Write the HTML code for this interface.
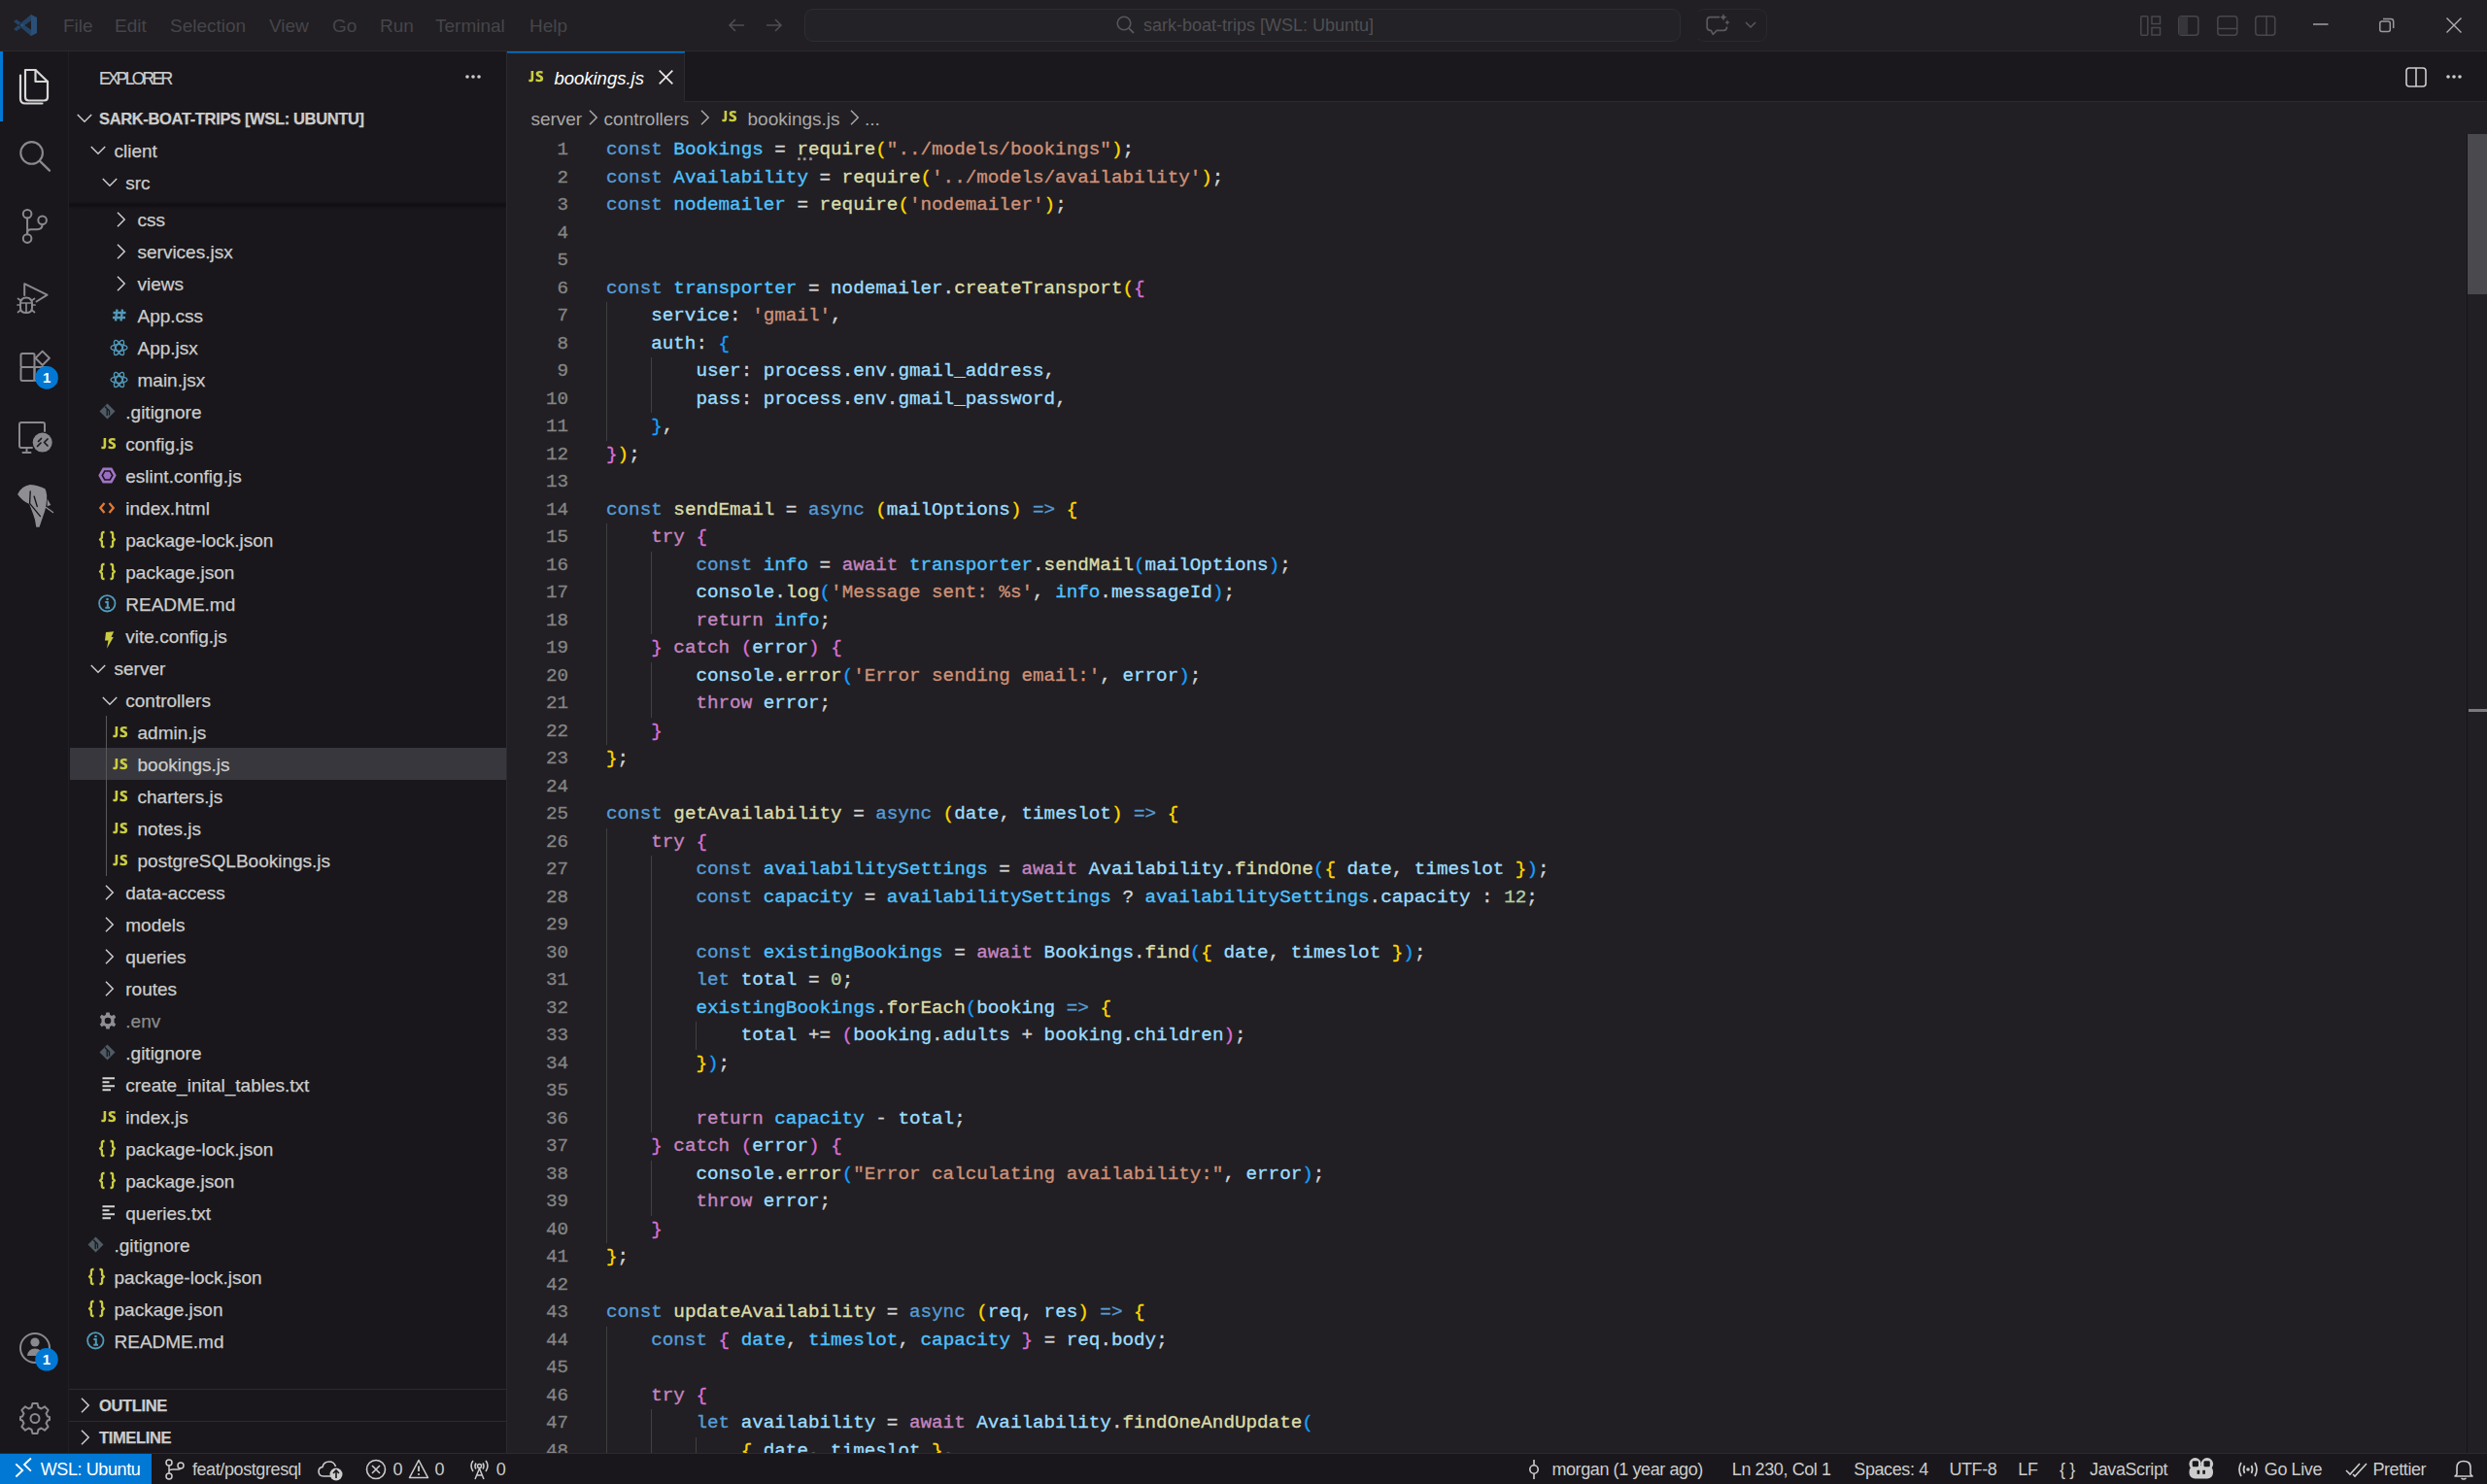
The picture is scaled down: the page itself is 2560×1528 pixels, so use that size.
<!DOCTYPE html>
<html><head><meta charset="utf-8">
<style>
*{margin:0;padding:0;box-sizing:border-box}
html,body{width:2560px;height:1528px;overflow:hidden;background:#211f23;font-family:"Liberation Sans",sans-serif}
.abs{position:absolute}
#title{position:absolute;left:0;top:0;width:2560px;height:53px;background:#211f23;border-bottom:1px solid #2a292d}
.menu{position:absolute;top:14.5px;font-size:19px;color:#46454a;line-height:24px;white-space:nowrap}
#act{position:absolute;left:0;top:53px;width:71px;height:1443px;background:#19171b;border-right:1px solid #211f23}
#side{position:absolute;left:71px;top:53px;width:451px;height:1443px;background:#19171b;border-right:1px solid #2b2a2e;overflow:hidden}
#editor{position:absolute;left:522px;top:53px;width:2038px;height:1443px;background:#211f23;overflow:hidden}
#status{position:absolute;left:0;top:1496px;width:2560px;height:32px;background:#19171b;border-top:1px solid #2b2a2e}
.ln{position:absolute;left:624px;height:28.5px;line-height:28.5px;font-family:"Liberation Mono",monospace;font-size:19.25px;white-space:pre;color:#d4d4d4;-webkit-text-stroke:0.35px currentColor}
.gn{position:absolute;left:520px;width:65px;text-align:right;height:28.5px;line-height:28.5px;font-family:"Liberation Mono",monospace;font-size:19.25px;color:#858585;-webkit-text-stroke:0.3px currentColor}
.ig{position:absolute;width:1px;background:#404040}
.row{position:absolute;left:0;width:451px;height:33px;line-height:33px;font-size:19px;color:#cccccc;white-space:nowrap;-webkit-text-stroke:0.25px currentColor}
.row .t{position:absolute;top:1px}
.row .ic{position:absolute}
.st{position:absolute;top:1px;height:31px;line-height:31px;font-size:18px;letter-spacing:-0.4px;color:#cccccc;white-space:nowrap}
svg{position:absolute;overflow:visible}
.bold .t{font-weight:bold;font-size:16.5px;letter-spacing:-0.35px}
</style></head>
<body>
<!-- TITLE BAR -->
<div id="title">
  <svg style="left:13px;top:14px" width="26" height="24" viewBox="0 0 26 24"><path d="M19 1 L25 4 V20 L19 23 L7 12 Z M19 7 L12 12 L19 17 Z" fill="#2a4f78"/><path d="M1 8 L4 6 L19 17 V23 Z M1 16 L4 18 L19 7 V1 Z" fill="#234366"/></svg>
  <div class="menu" style="left:65px">File</div>
  <div class="menu" style="left:118px">Edit</div>
  <div class="menu" style="left:175px">Selection</div>
  <div class="menu" style="left:277px">View</div>
  <div class="menu" style="left:342px">Go</div>
  <div class="menu" style="left:391px">Run</div>
  <div class="menu" style="left:448px">Terminal</div>
  <div class="menu" style="left:545px">Help</div>
  <!-- nav arrows -->
  <svg style="left:748px;top:16px" width="20" height="20" viewBox="0 0 20 20"><path d="M18 10 H3 M9 4 L3 10 L9 16" stroke="#4e4d52" stroke-width="1.6" fill="none"/></svg>
  <svg style="left:787px;top:16px" width="20" height="20" viewBox="0 0 20 20"><path d="M2 10 H17 M11 4 L17 10 L11 16" stroke="#4e4d52" stroke-width="1.6" fill="none"/></svg>
  <!-- command center -->
  <div class="abs" style="left:828px;top:9px;width:902px;height:34px;background:#232226;border:1px solid #2e2d31;border-radius:9px"></div>
  <svg style="left:1148px;top:15px" width="22" height="22" viewBox="0 0 22 22"><circle cx="9" cy="9" r="6.8" stroke="#57565b" stroke-width="1.6" fill="none"/><path d="M13.8 13.8 L19 19" stroke="#57565b" stroke-width="1.8"/></svg>
  <div class="menu" style="left:1177px;top:13.5px;font-size:18px;color:#504f54">sark-boat-trips [WSL: Ubuntu]</div>
  <div class="abs" style="left:1745px;top:8.5px;width:74px;height:34.5px;background:#211f23;border:1px solid #2a292d;border-left-color:transparent;border-radius:9px"></div>
  <svg style="left:0;top:0" width="1830" height="50" viewBox="0 0 1830 50"><path d="M1770 17.6 H1760.5 Q1757.2 17.6 1757.2 21 V28 Q1757.2 31.3 1760.5 31.3 H1761.3 L1763.2 35.3 L1767.2 31.3 H1774.3 Q1777.5 31.3 1777.5 28 V27.6" stroke="#5a595e" stroke-width="1.7" fill="none" stroke-linejoin="round"/><path d="M1774 13.8 Q1774.6 17.2 1777.8 17.8 Q1774.6 18.4 1774 21.8 Q1773.4 18.4 1770.2 17.8 Q1773.4 17.2 1774 13.8 Z M1778 20.2 Q1778.4 22.6 1780.7 23.1 Q1778.4 23.6 1778 26 Q1777.6 23.6 1775.3 23.1 Q1777.6 22.6 1778 20.2 Z" fill="#5a595e"/></svg>
  <svg style="left:1796px;top:22px" width="12" height="8" viewBox="0 0 12 8"><path d="M1 1 L6 6 L11 1" stroke="#58575c" stroke-width="1.5" fill="none"/></svg>
  <!-- layout icons -->
  <svg style="left:2203px;top:16px" width="22" height="21" viewBox="0 0 22 21"><rect x="0.8" y="0.8" width="7" height="19.4" rx="1" stroke="#48474c" stroke-width="1.5" fill="none"/><rect x="12" y="1" width="8.5" height="7.5" stroke="#48474c" stroke-width="1.5" fill="none"/><rect x="12" y="12.5" width="8.5" height="7.5" stroke="#48474c" stroke-width="1.5" fill="none"/></svg>
  <svg style="left:2242px;top:16px" width="22" height="21" viewBox="0 0 22 21"><rect x="0.8" y="0.8" width="20" height="19.4" rx="3" stroke="#48474c" stroke-width="1.5" fill="none"/><rect x="1" y="1" width="9" height="19" fill="#36353a"/></svg>
  <svg style="left:2282px;top:16px" width="22" height="21" viewBox="0 0 22 21"><rect x="0.8" y="0.8" width="20" height="19.4" rx="3" stroke="#48474c" stroke-width="1.5" fill="none"/><path d="M1 13.5 H21" stroke="#48474c" stroke-width="1.5"/></svg>
  <svg style="left:2321px;top:16px" width="22" height="21" viewBox="0 0 22 21"><rect x="0.8" y="0.8" width="20" height="19.4" rx="3" stroke="#48474c" stroke-width="1.5" fill="none"/><path d="M12 1 V20" stroke="#48474c" stroke-width="1.5"/></svg>
  <!-- window controls -->
  <svg style="left:2381px;top:20px" width="16" height="10" viewBox="0 0 16 10"><path d="M0 5 H15.5" stroke="#9a999d" stroke-width="1.6"/></svg>
  <svg style="left:2449px;top:18px" width="16" height="16" viewBox="0 0 16 16"><rect x="0.8" y="4" width="10.5" height="10.5" rx="2" stroke="#9a999d" stroke-width="1.5" fill="none"/><path d="M4 1.5 H12 Q14.7 1.5 14.7 4.2 V11" stroke="#9a999d" stroke-width="1.5" fill="none"/></svg>
  <svg style="left:2518px;top:18px" width="16" height="16" viewBox="0 0 16 16"><path d="M0.5 0.5 L15.5 15.5 M15.5 0.5 L0.5 15.5" stroke="#b0afb3" stroke-width="1.4"/></svg>
</div>

<!-- ACTIVITY BAR -->
<div id="act">
  <div class="abs" style="left:0;top:0;width:3px;height:72px;background:#0078d4"></div>
  <svg style="left:0;top:-53px" width="71" height="1496" viewBox="0 0 71 1496">
   <g fill="none" stroke-linejoin="round" stroke-linecap="round">
    <!-- explorer -->
    <path d="M26 72 H36.5 L49 84 V100 Q49 103.5 45.5 103.5 H29.5 Q26 103.5 26 100 Z" stroke="#d7d7d7" stroke-width="2.2"/>
    <path d="M36.5 72 V84 H49" stroke="#d7d7d7" stroke-width="2.2"/>
    <path d="M21 77.5 V101.5 Q21 106.5 26 106.5 H43.5" stroke="#d7d7d7" stroke-width="2.2"/>
    <!-- search -->
    <circle cx="32.6" cy="157.4" r="11.3" stroke="#8a898d" stroke-width="2.1"/>
    <path d="M40.8 165.6 L51 175.6" stroke="#8a898d" stroke-width="2.3"/>
    <!-- scm -->
    <circle cx="28.1" cy="220.2" r="4.3" stroke="#8a898d" stroke-width="2"/>
    <circle cx="28.1" cy="245.6" r="4.3" stroke="#8a898d" stroke-width="2"/>
    <circle cx="43.6" cy="226.8" r="4.3" stroke="#8a898d" stroke-width="2"/>
    <path d="M28.1 224.5 V241.3" stroke="#8a898d" stroke-width="2"/>
    <path d="M28.1 240 Q28.1 236.3 32 236.3 H38 Q43.6 236.3 43.6 231.1" stroke="#8a898d" stroke-width="2"/>
    <!-- debug -->
    <path d="M25.2 304 V292.2 L48.6 303.6 L37.5 310.5" stroke="#8a898d" stroke-width="2"/>
    <path d="M21 313 Q21 306.5 27 306.5 Q33 306.5 33 313 V317 Q33 322 27 322 Q21 322 21 317 Z" stroke="#8a898d" stroke-width="2" fill="#18171b"/>
    <path d="M21 312 H33 M18 314 H21 M33 314 H36 M18.5 307.5 L21.5 309.5 M35.5 307.5 L32.5 309.5 M18.5 321.5 L21.5 319 M35.5 321.5 L32.5 319 M27 312 V322" stroke="#8a898d" stroke-width="1.7"/>
    <!-- extensions -->
    <rect x="21.5" y="364" width="14" height="14" rx="1.5" stroke="#8a898d" stroke-width="2"/>
    <rect x="21.5" y="378" width="14" height="14" rx="1.5" stroke="#8a898d" stroke-width="2"/>
    <rect x="35.5" y="378" width="14" height="14" rx="1.5" stroke="#8a898d" stroke-width="2"/>
    <path d="M36.5 368.8 L43.7 361.6 L50.9 368.8 L43.7 376 Z" stroke="#8a898d" stroke-width="2"/>
    <!-- remote explorer -->
    <path d="M33 461 H22 Q20 461 20 459 V437 Q20 435 22 435 H44 Q46 435 46 437 V444" stroke="#8a898d" stroke-width="2"/>
    <path d="M23.5 466 H31.5 M27.5 461 V466" stroke="#8a898d" stroke-width="2"/>
    <circle cx="43.7" cy="455.6" r="10" fill="#8a898d" stroke="none"/>
    <path d="M38.5 459.5 L42 456 M45.5 455.5 L49 452 M42.5 451.5 L39.5 454.5 M49 459 L46 456" stroke="#18171b" stroke-width="1.7"/>
    <!-- elephant -->
    <path d="M18.1 509 Q22 500.5 31 499.1 Q40 500 46.4 503.3 Q48.8 508 48 514.3 Q47.5 524 44.5 531 L40.5 542.8 L37.3 542.8 Q36.5 535 34 529 L30.2 519.1 Q23 516 18.1 509 Z" fill="#8f8e92" stroke="none"/>
    <path d="M48.6 513.5 L52.3 520 L48.6 521.3 Z" fill="#8f8e92" stroke="none"/>
    <path d="M47.5 522.5 L54.5 527.5" stroke="#8f8e92" stroke-width="1.4"/>
    <path d="M31.2 505.8 L30.6 518.3 L41.5 531.6 M35.1 511 L38.3 521.5" stroke="#141215" stroke-width="1.3"/>
    <!-- accounts -->
    <circle cx="36" cy="1388" r="15" stroke="#8a898d" stroke-width="2"/>
    <circle cx="36" cy="1382" r="4.6" fill="#8a898d" stroke="none"/>
    <path d="M28 1396 Q29 1388.5 36 1388.5 Q43 1388.5 44 1396 Z" fill="#8a898d" stroke="none"/>
    <!-- gear -->
    <path d="M33.5 1445 H38.5 L39.5 1449 L42.5 1450.5 L46 1448.3 L49.6 1451.9 L47.5 1455.5 L49 1458.5 L51 1459 V1462 L49 1462.5 L47.5 1465.5 L49.6 1469 L46 1472.7 L42.5 1470.5 L39.5 1472 L38.5 1476 H33.5 L32.5 1472 L29.5 1470.5 L26 1472.7 L22.4 1469 L24.5 1465.5 L23 1462.5 L21 1462 V1459 L23 1458.5 L24.5 1455.5 L22.4 1451.9 L26 1448.3 L29.5 1450.5 L32.5 1449 Z" stroke="#8a898d" stroke-width="2"/>
    <circle cx="36" cy="1460.5" r="4.5" stroke="#8a898d" stroke-width="2"/>
   </g>
   <circle cx="48.1" cy="388.9" r="11.8" fill="#0078d4"/>
   <circle cx="48" cy="1399.8" r="11.8" fill="#0078d4"/>
   <path d="M45 384 L49.5 381.5 V396 M45.5 396 H52.5" stroke="#ffffff" stroke-width="0" fill="none"/>
  </svg>
  <div class="abs" style="left:36.3px;top:323.9px;width:23.6px;height:23.6px;color:#fff;font-size:15px;font-weight:bold;text-align:center;line-height:24px">1</div>
  <div class="abs" style="left:36.2px;top:1334.8px;width:23.6px;height:23.6px;color:#fff;font-size:15px;font-weight:bold;text-align:center;line-height:24px">1</div>
</div>

<!-- SIDEBAR -->
<div id="side">
<div class="abs" style="left:1px;top:717px;width:450px;height:33px;background:#37373d"></div>
<div class="abs" style="left:37.5px;top:684px;width:1px;height:165px;background:#585858"></div>
<div class="row " style="top:156.0px"><span class="t" style="left:70.5px;color:#cccccc">css</span></div>
<svg style="left:49.0px;top:165.0px" width="10" height="16" viewBox="0 0 10 16"><path d="M1 0.8 L8.2 8 L1 15.2" stroke="#cccccc" stroke-width="1.5" fill="none"/></svg>
<div class="row " style="top:189.0px"><span class="t" style="left:70.5px;color:#cccccc">services.jsx</span></div>
<svg style="left:49.0px;top:198.0px" width="10" height="16" viewBox="0 0 10 16"><path d="M1 0.8 L8.2 8 L1 15.2" stroke="#cccccc" stroke-width="1.5" fill="none"/></svg>
<div class="row " style="top:222.0px"><span class="t" style="left:70.5px;color:#cccccc">views</span></div>
<svg style="left:49.0px;top:231.0px" width="10" height="16" viewBox="0 0 10 16"><path d="M1 0.8 L8.2 8 L1 15.2" stroke="#cccccc" stroke-width="1.5" fill="none"/></svg>
<div class="row " style="top:255.0px"><span class="t" style="left:70.5px;color:#cccccc">App.css</span></div>
<svg style="left:45.0px;top:264.9px" width="14" height="13" viewBox="0 0 14 13"><path d="M4.5 0.5 L3 12.5 M10 0.5 L8.5 12.5 M0.5 4 H13.5 M0 9 H13" stroke="#519aba" stroke-width="2.3" fill="none"/></svg>
<div class="row " style="top:288.0px"><span class="t" style="left:70.5px;color:#cccccc">App.jsx</span></div>
<svg style="left:42.0px;top:296.5px" width="19" height="16" viewBox="0 0 19 16"><g stroke="#519aba" stroke-width="1.3" fill="none"><ellipse cx="9.5" cy="8" rx="8.5" ry="3.3"/><ellipse cx="9.5" cy="8" rx="8.5" ry="3.3" transform="rotate(60 9.5 8)"/><ellipse cx="9.5" cy="8" rx="8.5" ry="3.3" transform="rotate(-60 9.5 8)"/></g></svg>
<div class="row " style="top:321.0px"><span class="t" style="left:70.5px;color:#cccccc">main.jsx</span></div>
<svg style="left:42.0px;top:329.5px" width="19" height="16" viewBox="0 0 19 16"><g stroke="#519aba" stroke-width="1.3" fill="none"><ellipse cx="9.5" cy="8" rx="8.5" ry="3.3"/><ellipse cx="9.5" cy="8" rx="8.5" ry="3.3" transform="rotate(60 9.5 8)"/><ellipse cx="9.5" cy="8" rx="8.5" ry="3.3" transform="rotate(-60 9.5 8)"/></g></svg>
<div class="row " style="top:354.0px"><span class="t" style="left:58.3px;color:#cccccc">.gitignore</span></div>
<svg style="left:30.5px;top:362.0px" width="17" height="17" viewBox="0 0 17 17"><path d="M8.5 0.5 L16.5 8.5 L8.5 16.5 L0.5 8.5 Z" fill="#4f5b64"/><path d="M6 3.5 L10.5 8 V12.5 M8.2 5.7 V13" stroke="#19171b" stroke-width="1.3" fill="none"/></svg>
<div class="row " style="top:387.0px"><span class="t" style="left:58.3px;color:#cccccc">config.js</span></div>
<svg style="left:32.5px;top:398.0px" width="16" height="12" viewBox="0 0 16 12"><path d="M5.2 0 V8.2 Q5.2 11.3 2.3 11.3 Q0.8 11.3 0.2 10.8 L0.6 8.5 Q1.2 8.9 1.9 8.9 Q2.6 8.9 2.6 7.9 V0 Z" fill="#cbcb41"/><path d="M14.8 0.6 Q13.8 0 12 0 Q7.6 0 7.6 3.3 Q7.6 5.3 10.3 6.3 Q12.4 7.1 12.4 7.9 Q12.4 8.9 11 8.9 Q9.3 8.9 7.8 8 L7.3 10.5 Q8.6 11.3 10.9 11.3 Q15.2 11.3 15.2 7.8 Q15.2 5.6 12.6 4.6 Q10.4 3.8 10.4 3.1 Q10.4 2.3 11.8 2.3 Q13.3 2.3 14.3 2.9 Z" fill="#cbcb41"/></svg>
<div class="row " style="top:420.0px"><span class="t" style="left:58.3px;color:#cccccc">eslint.config.js</span></div>
<svg style="left:30.0px;top:428.0px" width="19" height="17" viewBox="0 0 19 17"><path d="M4.8 0.5 H14.2 L18.7 8.5 L14.2 16.5 H4.8 L0.3 8.5 Z" fill="#a074c4"/><path d="M6.8 4 H12.2 L14.8 8.5 L12.2 13 H6.8 L4.2 8.5 Z" fill="#9a6cc0" stroke="#1d1525" stroke-width="1.6"/></svg>
<div class="row " style="top:453.0px"><span class="t" style="left:58.3px;color:#cccccc">index.html</span></div>
<svg style="left:30.5px;top:464.0px" width="16" height="12" viewBox="0 0 16 12"><path d="M5.5 1 L1.3 6 L5.5 11 M10.5 1 L14.7 6 L10.5 11" stroke="#e37933" stroke-width="2.3" fill="none"/></svg>
<div class="row " style="top:486.0px"><span class="t" style="left:58.3px;color:#cccccc">package-lock.json</span></div>
<svg style="left:31.3px;top:494.3px" width="17" height="17" viewBox="0 0 17 17"><path d="M5.5 1 H4.6 Q2.9 1 2.9 3 V6.6 L1 8.5 L2.9 10.4 V14 Q2.9 16 4.6 16 H5.5 M11.5 1 H12.4 Q14.1 1 14.1 3 V6.6 L16 8.5 L14.1 10.4 V14 Q14.1 16 12.4 16 H11.5" stroke="#cbcb41" stroke-width="2.3" fill="none" stroke-linejoin="round"/></svg>
<div class="row " style="top:519.0px"><span class="t" style="left:58.3px;color:#cccccc">package.json</span></div>
<svg style="left:31.3px;top:527.3px" width="17" height="17" viewBox="0 0 17 17"><path d="M5.5 1 H4.6 Q2.9 1 2.9 3 V6.6 L1 8.5 L2.9 10.4 V14 Q2.9 16 4.6 16 H5.5 M11.5 1 H12.4 Q14.1 1 14.1 3 V6.6 L16 8.5 L14.1 10.4 V14 Q14.1 16 12.4 16 H11.5" stroke="#cbcb41" stroke-width="2.3" fill="none" stroke-linejoin="round"/></svg>
<div class="row " style="top:552.0px"><span class="t" style="left:58.3px;color:#cccccc">README.md</span></div>
<svg style="left:30.0px;top:559.3px" width="19" height="19" viewBox="0 0 19 19"><circle cx="9.3" cy="9.3" r="8.2" stroke="#519aba" stroke-width="1.8" fill="none"/><path d="M7.3 8 H9.8 V13.5 M7.3 13.7 H12" stroke="#519aba" stroke-width="2" fill="none"/><circle cx="9.5" cy="5" r="1.3" fill="#519aba"/></svg>
<div class="row " style="top:585.0px"><span class="t" style="left:58.3px;color:#cccccc">vite.config.js</span></div>
<svg style="left:36.0px;top:597.0px" width="11" height="18" viewBox="0 0 11 18"><path d="M2 1 L10.2 0.2 L7.5 6 L9.8 6 L3 17.8 L4.5 9.5 L1 9.5 Z" fill="#cbcb41"/></svg>
<div class="row " style="top:618.0px"><span class="t" style="left:46.5px;color:#cccccc">server</span></div>
<svg style="left:21.7px;top:630.5px" width="16" height="10" viewBox="0 0 16 10"><path d="M0.8 1 L8 8.2 L15.2 1" stroke="#cccccc" stroke-width="1.5" fill="none"/></svg>
<div class="row " style="top:651.0px"><span class="t" style="left:58.3px;color:#cccccc">controllers</span></div>
<svg style="left:34.0px;top:663.5px" width="16" height="10" viewBox="0 0 16 10"><path d="M0.8 1 L8 8.2 L15.2 1" stroke="#cccccc" stroke-width="1.5" fill="none"/></svg>
<div class="row " style="top:684.0px"><span class="t" style="left:70.5px;color:#cccccc">admin.js</span></div>
<svg style="left:44.5px;top:695.0px" width="16" height="12" viewBox="0 0 16 12"><path d="M5.2 0 V8.2 Q5.2 11.3 2.3 11.3 Q0.8 11.3 0.2 10.8 L0.6 8.5 Q1.2 8.9 1.9 8.9 Q2.6 8.9 2.6 7.9 V0 Z" fill="#cbcb41"/><path d="M14.8 0.6 Q13.8 0 12 0 Q7.6 0 7.6 3.3 Q7.6 5.3 10.3 6.3 Q12.4 7.1 12.4 7.9 Q12.4 8.9 11 8.9 Q9.3 8.9 7.8 8 L7.3 10.5 Q8.6 11.3 10.9 11.3 Q15.2 11.3 15.2 7.8 Q15.2 5.6 12.6 4.6 Q10.4 3.8 10.4 3.1 Q10.4 2.3 11.8 2.3 Q13.3 2.3 14.3 2.9 Z" fill="#cbcb41"/></svg>
<div class="row " style="top:717.0px"><span class="t" style="left:70.5px;color:#cccccc">bookings.js</span></div>
<svg style="left:44.5px;top:728.0px" width="16" height="12" viewBox="0 0 16 12"><path d="M5.2 0 V8.2 Q5.2 11.3 2.3 11.3 Q0.8 11.3 0.2 10.8 L0.6 8.5 Q1.2 8.9 1.9 8.9 Q2.6 8.9 2.6 7.9 V0 Z" fill="#cbcb41"/><path d="M14.8 0.6 Q13.8 0 12 0 Q7.6 0 7.6 3.3 Q7.6 5.3 10.3 6.3 Q12.4 7.1 12.4 7.9 Q12.4 8.9 11 8.9 Q9.3 8.9 7.8 8 L7.3 10.5 Q8.6 11.3 10.9 11.3 Q15.2 11.3 15.2 7.8 Q15.2 5.6 12.6 4.6 Q10.4 3.8 10.4 3.1 Q10.4 2.3 11.8 2.3 Q13.3 2.3 14.3 2.9 Z" fill="#cbcb41"/></svg>
<div class="row " style="top:750.0px"><span class="t" style="left:70.5px;color:#cccccc">charters.js</span></div>
<svg style="left:44.5px;top:761.0px" width="16" height="12" viewBox="0 0 16 12"><path d="M5.2 0 V8.2 Q5.2 11.3 2.3 11.3 Q0.8 11.3 0.2 10.8 L0.6 8.5 Q1.2 8.9 1.9 8.9 Q2.6 8.9 2.6 7.9 V0 Z" fill="#cbcb41"/><path d="M14.8 0.6 Q13.8 0 12 0 Q7.6 0 7.6 3.3 Q7.6 5.3 10.3 6.3 Q12.4 7.1 12.4 7.9 Q12.4 8.9 11 8.9 Q9.3 8.9 7.8 8 L7.3 10.5 Q8.6 11.3 10.9 11.3 Q15.2 11.3 15.2 7.8 Q15.2 5.6 12.6 4.6 Q10.4 3.8 10.4 3.1 Q10.4 2.3 11.8 2.3 Q13.3 2.3 14.3 2.9 Z" fill="#cbcb41"/></svg>
<div class="row " style="top:783.0px"><span class="t" style="left:70.5px;color:#cccccc">notes.js</span></div>
<svg style="left:44.5px;top:794.0px" width="16" height="12" viewBox="0 0 16 12"><path d="M5.2 0 V8.2 Q5.2 11.3 2.3 11.3 Q0.8 11.3 0.2 10.8 L0.6 8.5 Q1.2 8.9 1.9 8.9 Q2.6 8.9 2.6 7.9 V0 Z" fill="#cbcb41"/><path d="M14.8 0.6 Q13.8 0 12 0 Q7.6 0 7.6 3.3 Q7.6 5.3 10.3 6.3 Q12.4 7.1 12.4 7.9 Q12.4 8.9 11 8.9 Q9.3 8.9 7.8 8 L7.3 10.5 Q8.6 11.3 10.9 11.3 Q15.2 11.3 15.2 7.8 Q15.2 5.6 12.6 4.6 Q10.4 3.8 10.4 3.1 Q10.4 2.3 11.8 2.3 Q13.3 2.3 14.3 2.9 Z" fill="#cbcb41"/></svg>
<div class="row " style="top:816.0px"><span class="t" style="left:70.5px;color:#cccccc">postgreSQLBookings.js</span></div>
<svg style="left:44.5px;top:827.0px" width="16" height="12" viewBox="0 0 16 12"><path d="M5.2 0 V8.2 Q5.2 11.3 2.3 11.3 Q0.8 11.3 0.2 10.8 L0.6 8.5 Q1.2 8.9 1.9 8.9 Q2.6 8.9 2.6 7.9 V0 Z" fill="#cbcb41"/><path d="M14.8 0.6 Q13.8 0 12 0 Q7.6 0 7.6 3.3 Q7.6 5.3 10.3 6.3 Q12.4 7.1 12.4 7.9 Q12.4 8.9 11 8.9 Q9.3 8.9 7.8 8 L7.3 10.5 Q8.6 11.3 10.9 11.3 Q15.2 11.3 15.2 7.8 Q15.2 5.6 12.6 4.6 Q10.4 3.8 10.4 3.1 Q10.4 2.3 11.8 2.3 Q13.3 2.3 14.3 2.9 Z" fill="#cbcb41"/></svg>
<div class="row " style="top:849.0px"><span class="t" style="left:58.3px;color:#cccccc">data-access</span></div>
<svg style="left:37.0px;top:858.0px" width="10" height="16" viewBox="0 0 10 16"><path d="M1 0.8 L8.2 8 L1 15.2" stroke="#cccccc" stroke-width="1.5" fill="none"/></svg>
<div class="row " style="top:882.0px"><span class="t" style="left:58.3px;color:#cccccc">models</span></div>
<svg style="left:37.0px;top:891.0px" width="10" height="16" viewBox="0 0 10 16"><path d="M1 0.8 L8.2 8 L1 15.2" stroke="#cccccc" stroke-width="1.5" fill="none"/></svg>
<div class="row " style="top:915.0px"><span class="t" style="left:58.3px;color:#cccccc">queries</span></div>
<svg style="left:37.0px;top:924.0px" width="10" height="16" viewBox="0 0 10 16"><path d="M1 0.8 L8.2 8 L1 15.2" stroke="#cccccc" stroke-width="1.5" fill="none"/></svg>
<div class="row " style="top:948.0px"><span class="t" style="left:58.3px;color:#cccccc">routes</span></div>
<svg style="left:37.0px;top:957.0px" width="10" height="16" viewBox="0 0 10 16"><path d="M1 0.8 L8.2 8 L1 15.2" stroke="#cccccc" stroke-width="1.5" fill="none"/></svg>
<div class="row " style="top:981.0px"><span class="t" style="left:58.3px;color:#8b8b8b">.env</span></div>
<svg style="left:30.5px;top:989.3px" width="18" height="18" viewBox="0 0 18 18"><path d="M7.3 0.5 H10.7 L11.2 3 L13 4 L15.4 2.8 L17.2 5.3 L15.5 7.2 V10.8 L17.2 12.7 L15.4 15.2 L13 14 L11.2 15 L10.7 17.5 H7.3 L6.8 15 L5 14 L2.6 15.2 L0.8 12.7 L2.5 10.8 V7.2 L0.8 5.3 L2.6 2.8 L5 4 L6.8 3 Z" fill="#8f8f93"/><circle cx="9" cy="9" r="3.3" fill="#19171b"/></svg>
<div class="row " style="top:1014.0px"><span class="t" style="left:58.3px;color:#cccccc">.gitignore</span></div>
<svg style="left:30.5px;top:1022.0px" width="17" height="17" viewBox="0 0 17 17"><path d="M8.5 0.5 L16.5 8.5 L8.5 16.5 L0.5 8.5 Z" fill="#4f5b64"/><path d="M6 3.5 L10.5 8 V12.5 M8.2 5.7 V13" stroke="#19171b" stroke-width="1.3" fill="none"/></svg>
<div class="row " style="top:1047.0px"><span class="t" style="left:58.3px;color:#cccccc">create_inital_tables.txt</span></div>
<svg style="left:34.0px;top:1056.3px" width="14" height="15" viewBox="0 0 14 15"><path d="M0.5 1.3 H13 M0.5 5.3 H7.5 M0.5 9.3 H13 M0.5 13.3 H9" stroke="#d4d7d6" stroke-width="2.1"/></svg>
<div class="row " style="top:1080.0px"><span class="t" style="left:58.3px;color:#cccccc">index.js</span></div>
<svg style="left:32.5px;top:1091.0px" width="16" height="12" viewBox="0 0 16 12"><path d="M5.2 0 V8.2 Q5.2 11.3 2.3 11.3 Q0.8 11.3 0.2 10.8 L0.6 8.5 Q1.2 8.9 1.9 8.9 Q2.6 8.9 2.6 7.9 V0 Z" fill="#cbcb41"/><path d="M14.8 0.6 Q13.8 0 12 0 Q7.6 0 7.6 3.3 Q7.6 5.3 10.3 6.3 Q12.4 7.1 12.4 7.9 Q12.4 8.9 11 8.9 Q9.3 8.9 7.8 8 L7.3 10.5 Q8.6 11.3 10.9 11.3 Q15.2 11.3 15.2 7.8 Q15.2 5.6 12.6 4.6 Q10.4 3.8 10.4 3.1 Q10.4 2.3 11.8 2.3 Q13.3 2.3 14.3 2.9 Z" fill="#cbcb41"/></svg>
<div class="row " style="top:1113.0px"><span class="t" style="left:58.3px;color:#cccccc">package-lock.json</span></div>
<svg style="left:31.3px;top:1121.3px" width="17" height="17" viewBox="0 0 17 17"><path d="M5.5 1 H4.6 Q2.9 1 2.9 3 V6.6 L1 8.5 L2.9 10.4 V14 Q2.9 16 4.6 16 H5.5 M11.5 1 H12.4 Q14.1 1 14.1 3 V6.6 L16 8.5 L14.1 10.4 V14 Q14.1 16 12.4 16 H11.5" stroke="#cbcb41" stroke-width="2.3" fill="none" stroke-linejoin="round"/></svg>
<div class="row " style="top:1146.0px"><span class="t" style="left:58.3px;color:#cccccc">package.json</span></div>
<svg style="left:31.3px;top:1154.3px" width="17" height="17" viewBox="0 0 17 17"><path d="M5.5 1 H4.6 Q2.9 1 2.9 3 V6.6 L1 8.5 L2.9 10.4 V14 Q2.9 16 4.6 16 H5.5 M11.5 1 H12.4 Q14.1 1 14.1 3 V6.6 L16 8.5 L14.1 10.4 V14 Q14.1 16 12.4 16 H11.5" stroke="#cbcb41" stroke-width="2.3" fill="none" stroke-linejoin="round"/></svg>
<div class="row " style="top:1179.0px"><span class="t" style="left:58.3px;color:#cccccc">queries.txt</span></div>
<svg style="left:34.0px;top:1188.3px" width="14" height="15" viewBox="0 0 14 15"><path d="M0.5 1.3 H13 M0.5 5.3 H7.5 M0.5 9.3 H13 M0.5 13.3 H9" stroke="#d4d7d6" stroke-width="2.1"/></svg>
<div class="row " style="top:1212.0px"><span class="t" style="left:46.5px;color:#cccccc">.gitignore</span></div>
<svg style="left:19.0px;top:1220.0px" width="17" height="17" viewBox="0 0 17 17"><path d="M8.5 0.5 L16.5 8.5 L8.5 16.5 L0.5 8.5 Z" fill="#4f5b64"/><path d="M6 3.5 L10.5 8 V12.5 M8.2 5.7 V13" stroke="#19171b" stroke-width="1.3" fill="none"/></svg>
<div class="row " style="top:1245.0px"><span class="t" style="left:46.5px;color:#cccccc">package-lock.json</span></div>
<svg style="left:19.8px;top:1253.3px" width="17" height="17" viewBox="0 0 17 17"><path d="M5.5 1 H4.6 Q2.9 1 2.9 3 V6.6 L1 8.5 L2.9 10.4 V14 Q2.9 16 4.6 16 H5.5 M11.5 1 H12.4 Q14.1 1 14.1 3 V6.6 L16 8.5 L14.1 10.4 V14 Q14.1 16 12.4 16 H11.5" stroke="#cbcb41" stroke-width="2.3" fill="none" stroke-linejoin="round"/></svg>
<div class="row " style="top:1278.0px"><span class="t" style="left:46.5px;color:#cccccc">package.json</span></div>
<svg style="left:19.8px;top:1286.3px" width="17" height="17" viewBox="0 0 17 17"><path d="M5.5 1 H4.6 Q2.9 1 2.9 3 V6.6 L1 8.5 L2.9 10.4 V14 Q2.9 16 4.6 16 H5.5 M11.5 1 H12.4 Q14.1 1 14.1 3 V6.6 L16 8.5 L14.1 10.4 V14 Q14.1 16 12.4 16 H11.5" stroke="#cbcb41" stroke-width="2.3" fill="none" stroke-linejoin="round"/></svg>
<div class="row " style="top:1311.0px"><span class="t" style="left:46.5px;color:#cccccc">README.md</span></div>
<svg style="left:18.0px;top:1318.3px" width="19" height="19" viewBox="0 0 19 19"><circle cx="9.3" cy="9.3" r="8.2" stroke="#519aba" stroke-width="1.8" fill="none"/><path d="M7.3 8 H9.8 V13.5 M7.3 13.7 H12" stroke="#519aba" stroke-width="2" fill="none"/><circle cx="9.5" cy="5" r="1.3" fill="#519aba"/></svg>
<div class="abs" style="left:0;top:84px;width:451px;height:72px;background:#19171b"></div>
<div class="abs" style="left:0;top:154px;width:451px;height:8px;background:linear-gradient(#19171b,#100e12 50%,#19171b)"></div>
<div class="row " style="top:85.0px"><span class="t" style="left:46.5px;color:#cccccc">client</span></div>
<svg style="left:21.7px;top:97.0px" width="16" height="10" viewBox="0 0 16 10"><path d="M0.8 1 L8 8.2 L15.2 1" stroke="#cccccc" stroke-width="1.5" fill="none"/></svg>
<div class="row " style="top:117.5px"><span class="t" style="left:58.3px;color:#cccccc">src</span></div>
<svg style="left:34.0px;top:130.0px" width="16" height="10" viewBox="0 0 16 10"><path d="M0.8 1 L8 8.2 L15.2 1" stroke="#cccccc" stroke-width="1.5" fill="none"/></svg>
<div class="row bold" style="top:52.0px"><span class="t" style="left:31.0px;color:#cccccc">SARK-BOAT-TRIPS [WSL: UBUNTU]</span></div>
<svg style="left:8.0px;top:63.5px" width="16" height="10" viewBox="0 0 16 10"><path d="M0.8 1 L8 8.2 L15.2 1" stroke="#cccccc" stroke-width="1.5" fill="none"/></svg>
<div class="abs" style="left:31.0px;top:18px;font-size:17.5px;color:#cccccc;line-height:20px;letter-spacing:-2.75px;white-space:nowrap;-webkit-text-stroke:0.2px currentColor">EXPLORER</div>
<svg style="left:407.5px;top:24px" width="16" height="4" viewBox="0 0 16 4"><circle cx="2" cy="2" r="1.8" fill="#cccccc"/><circle cx="8" cy="2" r="1.8" fill="#cccccc"/><circle cx="14" cy="2" r="1.8" fill="#cccccc"/></svg>
<div class="abs" style="left:0;top:1377px;width:451px;height:1px;background:#2b2a2e"></div>
<div class="row bold" style="top:1377.0px"><span class="t" style="left:31.0px;color:#cccccc">OUTLINE</span></div>
<svg style="left:12.0px;top:1386.0px" width="10" height="16" viewBox="0 0 10 16"><path d="M1 0.8 L8.2 8 L1 15.2" stroke="#cccccc" stroke-width="1.5" fill="none"/></svg>
<div class="abs" style="left:0;top:1410px;width:451px;height:1px;background:#2b2a2e"></div>
<div class="row bold" style="top:1410.0px"><span class="t" style="left:31.0px;color:#cccccc">TIMELINE</span></div>
<svg style="left:12.0px;top:1419.0px" width="10" height="16" viewBox="0 0 10 16"><path d="M1 0.8 L8.2 8 L1 15.2" stroke="#cccccc" stroke-width="1.5" fill="none"/></svg>
</div>

<!-- EDITOR -->
<div id="editor">
<div class="abs" style="left:0;top:0;width:2038px;height:52px;background:#1a181c;border-bottom:1px solid #2b2a2e"></div>
<div class="abs" style="left:0;top:0;width:183px;height:52px;background:#211f23;border-right:1px solid #2b2a2e"></div>
<div class="abs" style="left:0;top:0;width:183px;height:1px;background:#0078d4"></div>
<div class="abs" style="left:0;top:1px;width:183px;height:1px;background:#0a4c80"></div>
<svg style="left:21.7px;top:20.0px" width="16" height="12" viewBox="0 0 16 12"><path d="M5.2 0 V8.2 Q5.2 11.3 2.3 11.3 Q0.8 11.3 0.2 10.8 L0.6 8.5 Q1.2 8.9 1.9 8.9 Q2.6 8.9 2.6 7.9 V0 Z" fill="#cbcb41"/><path d="M14.8 0.6 Q13.8 0 12 0 Q7.6 0 7.6 3.3 Q7.6 5.3 10.3 6.3 Q12.4 7.1 12.4 7.9 Q12.4 8.9 11 8.9 Q9.3 8.9 7.8 8 L7.3 10.5 Q8.6 11.3 10.9 11.3 Q15.2 11.3 15.2 7.8 Q15.2 5.6 12.6 4.6 Q10.4 3.8 10.4 3.1 Q10.4 2.3 11.8 2.3 Q13.3 2.3 14.3 2.9 Z" fill="#cbcb41"/></svg>
<div class="abs" style="left:48.4px;top:16.5px;font:italic 18.5px 'Liberation Sans',sans-serif;color:#ffffff;line-height:22px;white-space:nowrap">bookings.js</div>
<svg style="left:155.5px;top:19.0px" width="15" height="15" viewBox="0 0 15 15"><path d="M0.7 0.7 L14.3 14.3 M14.3 0.7 L0.7 14.3" stroke="#e8e8e8" stroke-width="1.7"/></svg>
<svg style="left:1954.0px;top:15.5px" width="22" height="21" viewBox="0 0 22 21"><rect x="1" y="1" width="20" height="19" rx="3" stroke="#cccccc" stroke-width="1.6" fill="none"/><path d="M11 1 V20" stroke="#cccccc" stroke-width="1.6"/></svg>
<svg style="left:1996.0px;top:24.0px" width="16" height="4" viewBox="0 0 16 4"><circle cx="2" cy="2" r="1.8" fill="#cccccc"/><circle cx="8" cy="2" r="1.8" fill="#cccccc"/><circle cx="14" cy="2" r="1.8" fill="#cccccc"/></svg>
<div class="abs" style="left:24.4px;top:59.0px;font-size:19px;color:#a9a9a9;line-height:22px;white-space:nowrap">server</div>
<svg style="left:84.0px;top:60.0px" width="10" height="16" viewBox="0 0 10 16"><path d="M1 0.8 L8.2 8 L1 15.2" stroke="#a9a9a9" stroke-width="1.5" fill="none"/></svg>
<div class="abs" style="left:99.6px;top:59.0px;font-size:19px;color:#a9a9a9;line-height:22px;white-space:nowrap">controllers</div>
<svg style="left:199.0px;top:60.0px" width="10" height="16" viewBox="0 0 10 16"><path d="M1 0.8 L8.2 8 L1 15.2" stroke="#a9a9a9" stroke-width="1.5" fill="none"/></svg>
<svg style="left:221.2px;top:61.0px" width="16" height="12" viewBox="0 0 16 12"><path d="M5.2 0 V8.2 Q5.2 11.3 2.3 11.3 Q0.8 11.3 0.2 10.8 L0.6 8.5 Q1.2 8.9 1.9 8.9 Q2.6 8.9 2.6 7.9 V0 Z" fill="#cbcb41"/><path d="M14.8 0.6 Q13.8 0 12 0 Q7.6 0 7.6 3.3 Q7.6 5.3 10.3 6.3 Q12.4 7.1 12.4 7.9 Q12.4 8.9 11 8.9 Q9.3 8.9 7.8 8 L7.3 10.5 Q8.6 11.3 10.9 11.3 Q15.2 11.3 15.2 7.8 Q15.2 5.6 12.6 4.6 Q10.4 3.8 10.4 3.1 Q10.4 2.3 11.8 2.3 Q13.3 2.3 14.3 2.9 Z" fill="#cbcb41"/></svg>
<div class="abs" style="left:247.5px;top:59.0px;font-size:19px;color:#a9a9a9;line-height:22px;white-space:nowrap">bookings.js</div>
<svg style="left:352.6px;top:60.0px" width="10" height="16" viewBox="0 0 10 16"><path d="M1 0.8 L8.2 8 L1 15.2" stroke="#a9a9a9" stroke-width="1.5" fill="none"/></svg>
<div class="abs" style="left:368.0px;top:59.0px;font-size:19px;color:#a9a9a9;line-height:22px;white-space:nowrap">...</div>
<div class="abs" style="left:2017px;top:85px;width:1px;height:1358px;background:#151417"></div>
<div class="abs" style="left:2018px;top:85px;width:20px;height:165px;background:#4a494d"></div>
<div class="abs" style="left:2019px;top:677px;width:20px;height:3px;background:#7a797d"></div>
</div>
<div id="codewrap" style="position:absolute;left:0;top:0;width:2560px;height:1496px;overflow:hidden;pointer-events:none">
<div class="ig" style="left:624.0px;top:311.0px;height:142.5px"></div>
<div class="ig" style="left:670.2px;top:368.0px;height:57.0px"></div>
<div class="ig" style="left:624.0px;top:539.0px;height:228.0px"></div>
<div class="ig" style="left:670.2px;top:567.5px;height:85.5px"></div>
<div class="ig" style="left:670.2px;top:681.5px;height:57.0px"></div>
<div class="ig" style="left:624.0px;top:852.5px;height:427.5px"></div>
<div class="ig" style="left:670.2px;top:881.0px;height:285.0px"></div>
<div class="ig" style="left:716.4px;top:1052.0px;height:28.5px"></div>
<div class="ig" style="left:670.2px;top:1194.5px;height:57.0px"></div>
<div class="ig" style="left:624.0px;top:1365.5px;height:142.5px"></div>
<div class="ig" style="left:670.2px;top:1451.0px;height:57.0px"></div>
<div class="ig" style="left:716.4px;top:1479.5px;height:28.5px"></div>
<svg style="left:815px;top:158px" width="26" height="10" viewBox="0 0 26 10"><circle cx="7.5" cy="5.7" r="1.6" fill="#8f8f8f"/><circle cx="13.2" cy="5.7" r="1.6" fill="#8f8f8f"/><circle cx="19.5" cy="5.7" r="1.6" fill="#8f8f8f"/></svg>
<div class="gn" style="top:140.00px">1</div>
<div class="gn" style="top:168.50px">2</div>
<div class="gn" style="top:197.00px">3</div>
<div class="gn" style="top:225.50px">4</div>
<div class="gn" style="top:254.00px">5</div>
<div class="gn" style="top:282.50px">6</div>
<div class="gn" style="top:311.00px">7</div>
<div class="gn" style="top:339.50px">8</div>
<div class="gn" style="top:368.00px">9</div>
<div class="gn" style="top:396.50px">10</div>
<div class="gn" style="top:425.00px">11</div>
<div class="gn" style="top:453.50px">12</div>
<div class="gn" style="top:482.00px">13</div>
<div class="gn" style="top:510.50px">14</div>
<div class="gn" style="top:539.00px">15</div>
<div class="gn" style="top:567.50px">16</div>
<div class="gn" style="top:596.00px">17</div>
<div class="gn" style="top:624.50px">18</div>
<div class="gn" style="top:653.00px">19</div>
<div class="gn" style="top:681.50px">20</div>
<div class="gn" style="top:710.00px">21</div>
<div class="gn" style="top:738.50px">22</div>
<div class="gn" style="top:767.00px">23</div>
<div class="gn" style="top:795.50px">24</div>
<div class="gn" style="top:824.00px">25</div>
<div class="gn" style="top:852.50px">26</div>
<div class="gn" style="top:881.00px">27</div>
<div class="gn" style="top:909.50px">28</div>
<div class="gn" style="top:938.00px">29</div>
<div class="gn" style="top:966.50px">30</div>
<div class="gn" style="top:995.00px">31</div>
<div class="gn" style="top:1023.50px">32</div>
<div class="gn" style="top:1052.00px">33</div>
<div class="gn" style="top:1080.50px">34</div>
<div class="gn" style="top:1109.00px">35</div>
<div class="gn" style="top:1137.50px">36</div>
<div class="gn" style="top:1166.00px">37</div>
<div class="gn" style="top:1194.50px">38</div>
<div class="gn" style="top:1223.00px">39</div>
<div class="gn" style="top:1251.50px">40</div>
<div class="gn" style="top:1280.00px">41</div>
<div class="gn" style="top:1308.50px">42</div>
<div class="gn" style="top:1337.00px">43</div>
<div class="gn" style="top:1365.50px">44</div>
<div class="gn" style="top:1394.00px">45</div>
<div class="gn" style="top:1422.50px">46</div>
<div class="gn" style="top:1451.00px">47</div>
<div class="gn" style="top:1479.50px">48</div>
<div class="ln" style="top:140.00px"><span style="color:#569cd6">const</span><span style="color:#d4d4d4"> </span><span style="color:#4fc1ff">Bookings</span><span style="color:#d4d4d4"> = </span><span style="color:#dcdcaa">require</span><span style="color:#ffd700">(</span><span style="color:#ce9178">&quot;../models/bookings&quot;</span><span style="color:#ffd700">)</span><span style="color:#d4d4d4">;</span></div>
<div class="ln" style="top:168.50px"><span style="color:#569cd6">const</span><span style="color:#d4d4d4"> </span><span style="color:#4fc1ff">Availability</span><span style="color:#d4d4d4"> = </span><span style="color:#dcdcaa">require</span><span style="color:#ffd700">(</span><span style="color:#ce9178">&#x27;../models/availability&#x27;</span><span style="color:#ffd700">)</span><span style="color:#d4d4d4">;</span></div>
<div class="ln" style="top:197.00px"><span style="color:#569cd6">const</span><span style="color:#d4d4d4"> </span><span style="color:#4fc1ff">nodemailer</span><span style="color:#d4d4d4"> = </span><span style="color:#dcdcaa">require</span><span style="color:#ffd700">(</span><span style="color:#ce9178">&#x27;nodemailer&#x27;</span><span style="color:#ffd700">)</span><span style="color:#d4d4d4">;</span></div>
<div class="ln" style="top:225.50px"></div>
<div class="ln" style="top:254.00px"></div>
<div class="ln" style="top:282.50px"><span style="color:#569cd6">const</span><span style="color:#d4d4d4"> </span><span style="color:#4fc1ff">transporter</span><span style="color:#d4d4d4"> = </span><span style="color:#9cdcfe">nodemailer</span><span style="color:#d4d4d4">.</span><span style="color:#dcdcaa">createTransport</span><span style="color:#ffd700">(</span><span style="color:#da70d6">{</span></div>
<div class="ln" style="top:311.00px"><span style="color:#d4d4d4">    </span><span style="color:#9cdcfe">service</span><span style="color:#d4d4d4">: </span><span style="color:#ce9178">&#x27;gmail&#x27;</span><span style="color:#d4d4d4">,</span></div>
<div class="ln" style="top:339.50px"><span style="color:#d4d4d4">    </span><span style="color:#9cdcfe">auth</span><span style="color:#d4d4d4">: </span><span style="color:#179fff">{</span></div>
<div class="ln" style="top:368.00px"><span style="color:#d4d4d4">        </span><span style="color:#9cdcfe">user</span><span style="color:#d4d4d4">: </span><span style="color:#9cdcfe">process</span><span style="color:#d4d4d4">.</span><span style="color:#9cdcfe">env</span><span style="color:#d4d4d4">.</span><span style="color:#9cdcfe">gmail_address</span><span style="color:#d4d4d4">,</span></div>
<div class="ln" style="top:396.50px"><span style="color:#d4d4d4">        </span><span style="color:#9cdcfe">pass</span><span style="color:#d4d4d4">: </span><span style="color:#9cdcfe">process</span><span style="color:#d4d4d4">.</span><span style="color:#9cdcfe">env</span><span style="color:#d4d4d4">.</span><span style="color:#9cdcfe">gmail_password</span><span style="color:#d4d4d4">,</span></div>
<div class="ln" style="top:425.00px"><span style="color:#d4d4d4">    </span><span style="color:#179fff">}</span><span style="color:#d4d4d4">,</span></div>
<div class="ln" style="top:453.50px"><span style="color:#da70d6">}</span><span style="color:#ffd700">)</span><span style="color:#d4d4d4">;</span></div>
<div class="ln" style="top:482.00px"></div>
<div class="ln" style="top:510.50px"><span style="color:#569cd6">const</span><span style="color:#d4d4d4"> </span><span style="color:#dcdcaa">sendEmail</span><span style="color:#d4d4d4"> = </span><span style="color:#569cd6">async</span><span style="color:#d4d4d4"> </span><span style="color:#ffd700">(</span><span style="color:#9cdcfe">mailOptions</span><span style="color:#ffd700">)</span><span style="color:#d4d4d4"> </span><span style="color:#569cd6">=&gt;</span><span style="color:#d4d4d4"> </span><span style="color:#ffd700">{</span></div>
<div class="ln" style="top:539.00px"><span style="color:#d4d4d4">    </span><span style="color:#c586c0">try</span><span style="color:#d4d4d4"> </span><span style="color:#da70d6">{</span></div>
<div class="ln" style="top:567.50px"><span style="color:#d4d4d4">        </span><span style="color:#569cd6">const</span><span style="color:#d4d4d4"> </span><span style="color:#4fc1ff">info</span><span style="color:#d4d4d4"> = </span><span style="color:#c586c0">await</span><span style="color:#d4d4d4"> </span><span style="color:#4fc1ff">transporter</span><span style="color:#d4d4d4">.</span><span style="color:#dcdcaa">sendMail</span><span style="color:#179fff">(</span><span style="color:#9cdcfe">mailOptions</span><span style="color:#179fff">)</span><span style="color:#d4d4d4">;</span></div>
<div class="ln" style="top:596.00px"><span style="color:#d4d4d4">        </span><span style="color:#9cdcfe">console</span><span style="color:#d4d4d4">.</span><span style="color:#dcdcaa">log</span><span style="color:#179fff">(</span><span style="color:#ce9178">&#x27;Message sent: %s&#x27;</span><span style="color:#d4d4d4">, </span><span style="color:#4fc1ff">info</span><span style="color:#d4d4d4">.</span><span style="color:#9cdcfe">messageId</span><span style="color:#179fff">)</span><span style="color:#d4d4d4">;</span></div>
<div class="ln" style="top:624.50px"><span style="color:#d4d4d4">        </span><span style="color:#c586c0">return</span><span style="color:#d4d4d4"> </span><span style="color:#4fc1ff">info</span><span style="color:#d4d4d4">;</span></div>
<div class="ln" style="top:653.00px"><span style="color:#d4d4d4">    </span><span style="color:#da70d6">}</span><span style="color:#d4d4d4"> </span><span style="color:#c586c0">catch</span><span style="color:#d4d4d4"> </span><span style="color:#da70d6">(</span><span style="color:#9cdcfe">error</span><span style="color:#da70d6">)</span><span style="color:#d4d4d4"> </span><span style="color:#da70d6">{</span></div>
<div class="ln" style="top:681.50px"><span style="color:#d4d4d4">        </span><span style="color:#9cdcfe">console</span><span style="color:#d4d4d4">.</span><span style="color:#dcdcaa">error</span><span style="color:#179fff">(</span><span style="color:#ce9178">&#x27;Error sending email:&#x27;</span><span style="color:#d4d4d4">, </span><span style="color:#9cdcfe">error</span><span style="color:#179fff">)</span><span style="color:#d4d4d4">;</span></div>
<div class="ln" style="top:710.00px"><span style="color:#d4d4d4">        </span><span style="color:#c586c0">throw</span><span style="color:#d4d4d4"> </span><span style="color:#9cdcfe">error</span><span style="color:#d4d4d4">;</span></div>
<div class="ln" style="top:738.50px"><span style="color:#d4d4d4">    </span><span style="color:#da70d6">}</span></div>
<div class="ln" style="top:767.00px"><span style="color:#ffd700">}</span><span style="color:#d4d4d4">;</span></div>
<div class="ln" style="top:795.50px"></div>
<div class="ln" style="top:824.00px"><span style="color:#569cd6">const</span><span style="color:#d4d4d4"> </span><span style="color:#dcdcaa">getAvailability</span><span style="color:#d4d4d4"> = </span><span style="color:#569cd6">async</span><span style="color:#d4d4d4"> </span><span style="color:#ffd700">(</span><span style="color:#9cdcfe">date</span><span style="color:#d4d4d4">, </span><span style="color:#9cdcfe">timeslot</span><span style="color:#ffd700">)</span><span style="color:#d4d4d4"> </span><span style="color:#569cd6">=&gt;</span><span style="color:#d4d4d4"> </span><span style="color:#ffd700">{</span></div>
<div class="ln" style="top:852.50px"><span style="color:#d4d4d4">    </span><span style="color:#c586c0">try</span><span style="color:#d4d4d4"> </span><span style="color:#da70d6">{</span></div>
<div class="ln" style="top:881.00px"><span style="color:#d4d4d4">        </span><span style="color:#569cd6">const</span><span style="color:#d4d4d4"> </span><span style="color:#4fc1ff">availabilitySettings</span><span style="color:#d4d4d4"> = </span><span style="color:#c586c0">await</span><span style="color:#d4d4d4"> </span><span style="color:#9cdcfe">Availability</span><span style="color:#d4d4d4">.</span><span style="color:#dcdcaa">findOne</span><span style="color:#179fff">(</span><span style="color:#ffd700">{</span><span style="color:#d4d4d4"> </span><span style="color:#9cdcfe">date</span><span style="color:#d4d4d4">, </span><span style="color:#9cdcfe">timeslot</span><span style="color:#d4d4d4"> </span><span style="color:#ffd700">}</span><span style="color:#179fff">)</span><span style="color:#d4d4d4">;</span></div>
<div class="ln" style="top:909.50px"><span style="color:#d4d4d4">        </span><span style="color:#569cd6">const</span><span style="color:#d4d4d4"> </span><span style="color:#4fc1ff">capacity</span><span style="color:#d4d4d4"> = </span><span style="color:#4fc1ff">availabilitySettings</span><span style="color:#d4d4d4"> ? </span><span style="color:#4fc1ff">availabilitySettings</span><span style="color:#d4d4d4">.</span><span style="color:#9cdcfe">capacity</span><span style="color:#d4d4d4"> : </span><span style="color:#b5cea8">12</span><span style="color:#d4d4d4">;</span></div>
<div class="ln" style="top:938.00px"></div>
<div class="ln" style="top:966.50px"><span style="color:#d4d4d4">        </span><span style="color:#569cd6">const</span><span style="color:#d4d4d4"> </span><span style="color:#4fc1ff">existingBookings</span><span style="color:#d4d4d4"> = </span><span style="color:#c586c0">await</span><span style="color:#d4d4d4"> </span><span style="color:#9cdcfe">Bookings</span><span style="color:#d4d4d4">.</span><span style="color:#dcdcaa">find</span><span style="color:#179fff">(</span><span style="color:#ffd700">{</span><span style="color:#d4d4d4"> </span><span style="color:#9cdcfe">date</span><span style="color:#d4d4d4">, </span><span style="color:#9cdcfe">timeslot</span><span style="color:#d4d4d4"> </span><span style="color:#ffd700">}</span><span style="color:#179fff">)</span><span style="color:#d4d4d4">;</span></div>
<div class="ln" style="top:995.00px"><span style="color:#d4d4d4">        </span><span style="color:#569cd6">let</span><span style="color:#d4d4d4"> </span><span style="color:#9cdcfe">total</span><span style="color:#d4d4d4"> = </span><span style="color:#b5cea8">0</span><span style="color:#d4d4d4">;</span></div>
<div class="ln" style="top:1023.50px"><span style="color:#d4d4d4">        </span><span style="color:#4fc1ff">existingBookings</span><span style="color:#d4d4d4">.</span><span style="color:#dcdcaa">forEach</span><span style="color:#179fff">(</span><span style="color:#9cdcfe">booking</span><span style="color:#d4d4d4"> </span><span style="color:#569cd6">=&gt;</span><span style="color:#d4d4d4"> </span><span style="color:#ffd700">{</span></div>
<div class="ln" style="top:1052.00px"><span style="color:#d4d4d4">            </span><span style="color:#9cdcfe">total</span><span style="color:#d4d4d4"> += </span><span style="color:#da70d6">(</span><span style="color:#9cdcfe">booking</span><span style="color:#d4d4d4">.</span><span style="color:#9cdcfe">adults</span><span style="color:#d4d4d4"> + </span><span style="color:#9cdcfe">booking</span><span style="color:#d4d4d4">.</span><span style="color:#9cdcfe">children</span><span style="color:#da70d6">)</span><span style="color:#d4d4d4">;</span></div>
<div class="ln" style="top:1080.50px"><span style="color:#d4d4d4">        </span><span style="color:#ffd700">}</span><span style="color:#179fff">)</span><span style="color:#d4d4d4">;</span></div>
<div class="ln" style="top:1109.00px"></div>
<div class="ln" style="top:1137.50px"><span style="color:#d4d4d4">        </span><span style="color:#c586c0">return</span><span style="color:#d4d4d4"> </span><span style="color:#4fc1ff">capacity</span><span style="color:#d4d4d4"> - </span><span style="color:#9cdcfe">total</span><span style="color:#d4d4d4">;</span></div>
<div class="ln" style="top:1166.00px"><span style="color:#d4d4d4">    </span><span style="color:#da70d6">}</span><span style="color:#d4d4d4"> </span><span style="color:#c586c0">catch</span><span style="color:#d4d4d4"> </span><span style="color:#da70d6">(</span><span style="color:#9cdcfe">error</span><span style="color:#da70d6">)</span><span style="color:#d4d4d4"> </span><span style="color:#da70d6">{</span></div>
<div class="ln" style="top:1194.50px"><span style="color:#d4d4d4">        </span><span style="color:#9cdcfe">console</span><span style="color:#d4d4d4">.</span><span style="color:#dcdcaa">error</span><span style="color:#179fff">(</span><span style="color:#ce9178">&quot;Error calculating availability:&quot;</span><span style="color:#d4d4d4">, </span><span style="color:#9cdcfe">error</span><span style="color:#179fff">)</span><span style="color:#d4d4d4">;</span></div>
<div class="ln" style="top:1223.00px"><span style="color:#d4d4d4">        </span><span style="color:#c586c0">throw</span><span style="color:#d4d4d4"> </span><span style="color:#9cdcfe">error</span><span style="color:#d4d4d4">;</span></div>
<div class="ln" style="top:1251.50px"><span style="color:#d4d4d4">    </span><span style="color:#da70d6">}</span></div>
<div class="ln" style="top:1280.00px"><span style="color:#ffd700">}</span><span style="color:#d4d4d4">;</span></div>
<div class="ln" style="top:1308.50px"></div>
<div class="ln" style="top:1337.00px"><span style="color:#569cd6">const</span><span style="color:#d4d4d4"> </span><span style="color:#dcdcaa">updateAvailability</span><span style="color:#d4d4d4"> = </span><span style="color:#569cd6">async</span><span style="color:#d4d4d4"> </span><span style="color:#ffd700">(</span><span style="color:#9cdcfe">req</span><span style="color:#d4d4d4">, </span><span style="color:#9cdcfe">res</span><span style="color:#ffd700">)</span><span style="color:#d4d4d4"> </span><span style="color:#569cd6">=&gt;</span><span style="color:#d4d4d4"> </span><span style="color:#ffd700">{</span></div>
<div class="ln" style="top:1365.50px"><span style="color:#d4d4d4">    </span><span style="color:#569cd6">const</span><span style="color:#d4d4d4"> </span><span style="color:#da70d6">{</span><span style="color:#d4d4d4"> </span><span style="color:#4fc1ff">date</span><span style="color:#d4d4d4">, </span><span style="color:#4fc1ff">timeslot</span><span style="color:#d4d4d4">, </span><span style="color:#4fc1ff">capacity</span><span style="color:#d4d4d4"> </span><span style="color:#da70d6">}</span><span style="color:#d4d4d4"> = </span><span style="color:#9cdcfe">req</span><span style="color:#d4d4d4">.</span><span style="color:#9cdcfe">body</span><span style="color:#d4d4d4">;</span></div>
<div class="ln" style="top:1394.00px"></div>
<div class="ln" style="top:1422.50px"><span style="color:#d4d4d4">    </span><span style="color:#c586c0">try</span><span style="color:#d4d4d4"> </span><span style="color:#da70d6">{</span></div>
<div class="ln" style="top:1451.00px"><span style="color:#d4d4d4">        </span><span style="color:#569cd6">let</span><span style="color:#d4d4d4"> </span><span style="color:#9cdcfe">availability</span><span style="color:#d4d4d4"> = </span><span style="color:#c586c0">await</span><span style="color:#d4d4d4"> </span><span style="color:#9cdcfe">Availability</span><span style="color:#d4d4d4">.</span><span style="color:#dcdcaa">findOneAndUpdate</span><span style="color:#179fff">(</span></div>
<div class="ln" style="top:1479.50px"><span style="color:#d4d4d4">            </span><span style="color:#ffd700">{</span><span style="color:#d4d4d4"> </span><span style="color:#9cdcfe">date</span><span style="color:#d4d4d4">, </span><span style="color:#9cdcfe">timeslot</span><span style="color:#d4d4d4"> </span><span style="color:#ffd700">}</span><span style="color:#d4d4d4">,</span></div>
</div>

<!-- STATUS BAR -->
<div id="status">
<div class="abs" style="left:0;top:0;width:156px;height:31px;background:#0078d4"></div>
<svg style="left:0;top:-1497px" width="40" height="1528" viewBox="0 0 40 1528"><path d="M16.3 1507.3 L23.3 1514 L16.4 1520.5 M31.9 1501.5 L25 1508 L31.9 1514.7" stroke="#ffffff" stroke-width="1.8" fill="none"/></svg>
<div class="st" style="left:41.7px;color:#ffffff">WSL: Ubuntu</div>
<svg style="left:170px;top:5px" width="20" height="22" viewBox="0 0 20 22"><circle cx="4" cy="4" r="3" stroke="#cccccc" stroke-width="1.5" fill="none"/><circle cx="4" cy="18" r="3" stroke="#cccccc" stroke-width="1.5" fill="none"/><circle cx="16" cy="7" r="3" stroke="#cccccc" stroke-width="1.5" fill="none"/><path d="M4 7 V15 M4 13 Q4 11 8 11 H12 Q16 11 16 10" stroke="#cccccc" stroke-width="1.5" fill="none"/></svg>
<div class="st" style="left:197.9px;color:#cccccc">feat/postgresql</div>
<svg style="left:327px;top:6px" width="26" height="22" viewBox="0 0 26 22"><path d="M14 17 H6 Q1 17 1 12 Q1 8 5 7.5 Q6 2 12 2 Q17 2 18.5 7" stroke="#cccccc" stroke-width="1.6" fill="none"/><circle cx="19" cy="15" r="6.5" fill="#cccccc"/><path d="M19 19 V11.5 M16 14 L19 11 L22 14" stroke="#18171b" stroke-width="1.6" fill="none"/></svg>
<svg style="left:376px;top:5px" width="22" height="22" viewBox="0 0 22 22"><circle cx="11" cy="11" r="9.5" stroke="#cccccc" stroke-width="1.6" fill="none"/><path d="M7 7 L15 15 M15 7 L7 15" stroke="#cccccc" stroke-width="1.6"/></svg>
<div class="st" style="left:404.4px;color:#cccccc">0</div>
<svg style="left:420px;top:5px" width="22" height="21" viewBox="0 0 22 21"><path d="M11 1.5 L20.5 19.5 H1.5 Z" stroke="#cccccc" stroke-width="1.6" fill="none" stroke-linejoin="round"/><path d="M11 7.5 V13" stroke="#cccccc" stroke-width="1.8"/><circle cx="11" cy="16" r="1.1" fill="#cccccc"/></svg>
<div class="st" style="left:447.5px;color:#cccccc">0</div>
<svg style="left:483px;top:5px" width="21" height="22" viewBox="0 0 21 22"><path d="M4 2 Q0 7 4 13 M17 2 Q21 7 17 13 M7 4.5 Q5 7.5 7 10.5 M14 4.5 Q16 7.5 14 10.5" stroke="#cccccc" stroke-width="1.6" fill="none"/><circle cx="10.5" cy="7.5" r="2" stroke="#cccccc" stroke-width="1.5" fill="none"/><path d="M10.5 10 L6 21 M10.5 10 L15 21 M7.5 17 H13.5" stroke="#cccccc" stroke-width="1.5" fill="none"/></svg>
<div class="st" style="left:510.8px;color:#cccccc">0</div>
<svg style="left:1572px;top:6px" width="14" height="20" viewBox="0 0 14 20"><circle cx="7" cy="10" r="4.2" stroke="#cccccc" stroke-width="1.6" fill="none"/><path d="M7 0 V5.8 M7 14.2 V20" stroke="#cccccc" stroke-width="1.6"/></svg>
<div class="st" style="left:1597.4px;color:#cccccc">morgan (1 year ago)</div>
<div class="st" style="left:1782.8px;color:#cccccc">Ln 230, Col 1</div>
<div class="st" style="left:1908.3px;color:#cccccc">Spaces: 4</div>
<div class="st" style="left:2006.4px;color:#cccccc">UTF-8</div>
<div class="st" style="left:2077.3px;color:#cccccc">LF</div>
<div class="st" style="left:2120.0px;color:#cccccc">{ }</div>
<div class="st" style="left:2151.1px;color:#cccccc">JavaScript</div>
<svg style="left:0;top:-1497px" width="2560" height="1528" viewBox="0 0 2560 1528"><circle cx="2259.6" cy="1507.3" r="6.2" fill="#cccccc"/><circle cx="2271.9" cy="1507.3" r="6.2" fill="#cccccc"/><rect x="2253.5" y="1509" width="24.5" height="13.5" rx="6" fill="#cccccc"/><rect x="2256.7" y="1504.2" width="6.3" height="6" rx="1.2" fill="#19171b"/><rect x="2268.5" y="1504.2" width="6.3" height="6" rx="1.2" fill="#19171b"/><rect x="2261.6" y="1513.8" width="2.6" height="4" fill="#19171b"/><rect x="2267.3" y="1513.8" width="2.6" height="4" fill="#19171b"/></svg>
<svg style="left:2302px;top:6px" width="24" height="20" viewBox="0 0 24 20"><path d="M5 3 Q1 10 5 17 M19 3 Q23 10 19 17 M8.5 6 Q6.5 10 8.5 14 M15.5 6 Q17.5 10 15.5 14" stroke="#cccccc" stroke-width="1.7" fill="none"/><circle cx="12" cy="10" r="1.8" fill="#cccccc"/></svg>
<div class="st" style="left:2330.8px;color:#cccccc">Go Live</div>
<svg style="left:2414px;top:8px" width="23" height="16" viewBox="0 0 23 16"><path d="M1 9 L5 13 L15 2 M8 13 L10 15 L22 2" stroke="#cccccc" stroke-width="1.6" fill="none"/></svg>
<div class="st" style="left:2442.4px;color:#cccccc">Prettier</div>
<svg style="left:2526px;top:5px" width="20" height="22" viewBox="0 0 20 22"><path d="M3 16 V9 Q3 2.5 10 2.5 Q17 2.5 17 9 V16 L19 18 H1 Z" stroke="#cccccc" stroke-width="1.6" fill="none" stroke-linejoin="round"/><path d="M7.5 20 Q10 22 12.5 20" stroke="#cccccc" stroke-width="1.6" fill="none"/></svg>
</div>
</body></html>
